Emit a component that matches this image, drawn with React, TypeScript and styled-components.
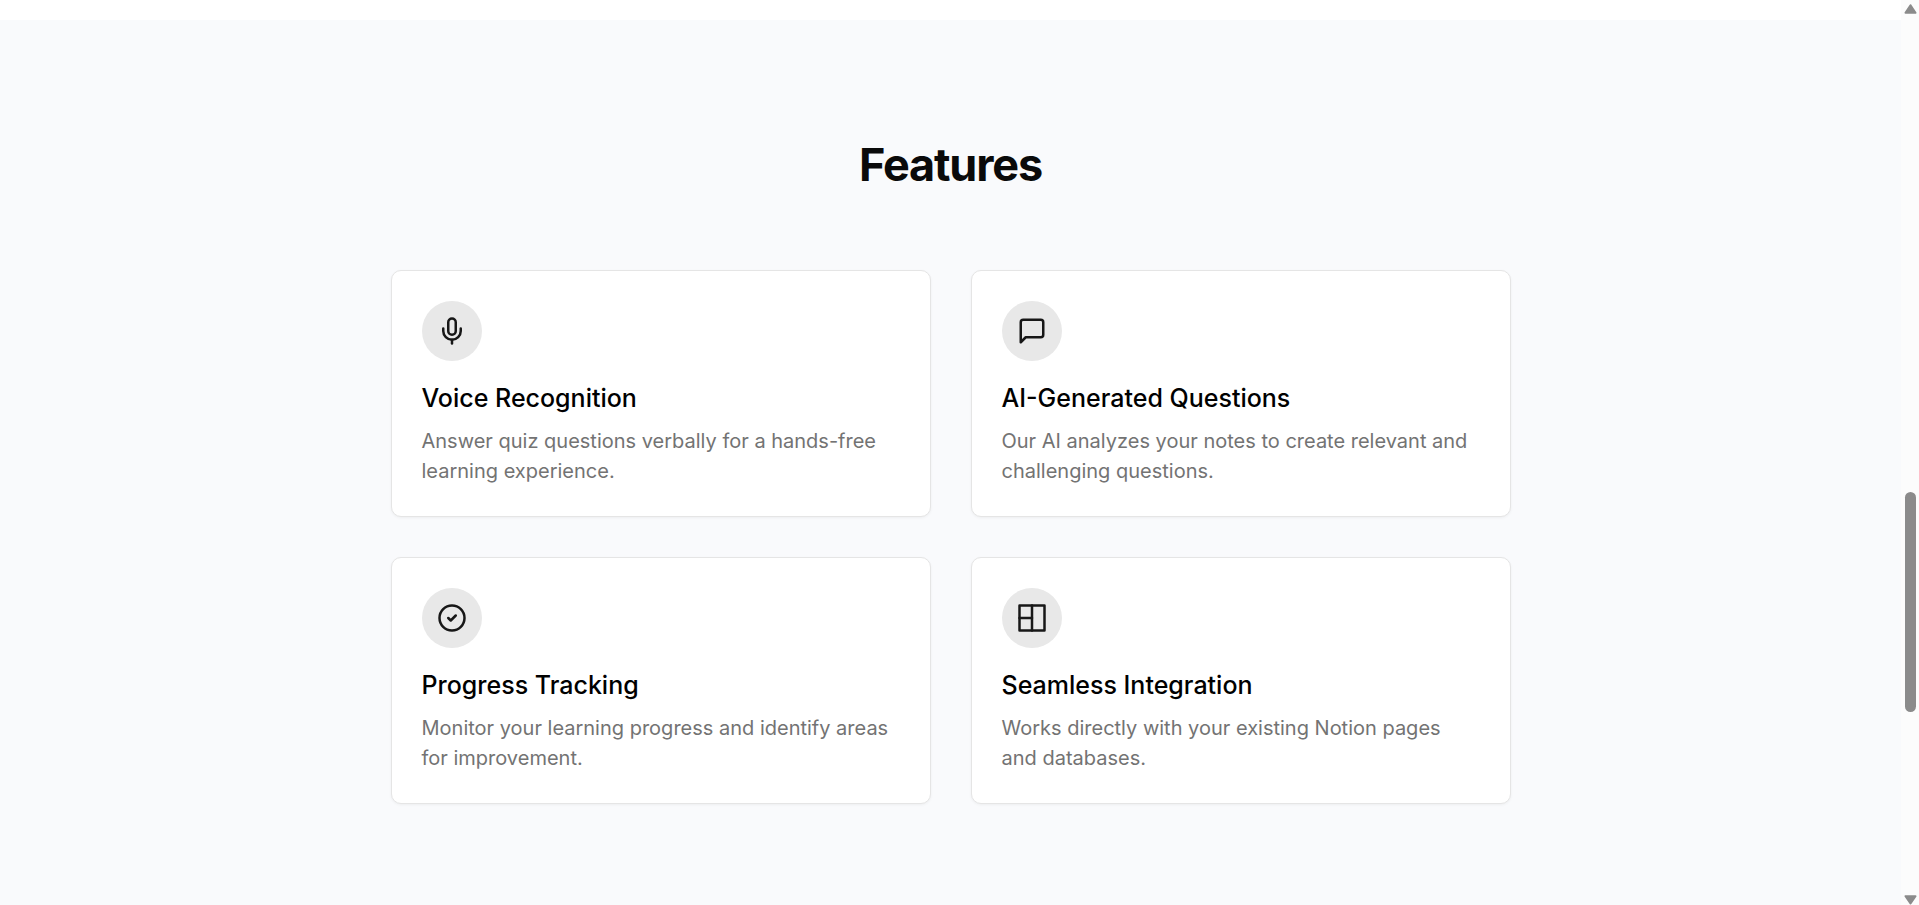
import React from "react";
import styled, { createGlobalStyle } from "styled-components";

const GlobalStyle = createGlobalStyle`
  *, *::before, *::after { box-sizing: border-box; }
  body {
    margin: 0;
    background: #ffffff;
    color: #0a0a0a;
    font-family: Inter, "Liberation Sans", sans-serif;
  }
  h2, h3, p { margin: 0; }
`;

const Viewport = styled.div`
  display: flex;
  height: 100vh;
`;

const Main = styled.main`
  flex: 1;
  min-width: 0;
  padding-top: 20px;
  overflow-y: auto;
  scrollbar-width: none;
`;

const Section = styled.section`
  display: flex;
  flex-direction: column;
  align-items: center;
  gap: 80px;
  padding: 120px 30px;
  background: #f9fafc;
`;

const SectionTitle = styled.h2`
  font-size: 45px;
  line-height: 50px;
  font-weight: 700;
  letter-spacing: -0.025em;
  text-align: center;
`;

const FeatureGrid = styled.div`
  display: grid;
  grid-template-columns: repeat(2, minmax(0, 1fr));
  gap: 40px;
  width: 100%;
  max-width: 1120px;

  @media (max-width: 800px) {
    grid-template-columns: minmax(0, 1fr);
  }
`;

const Card = styled.article`
  padding: 30px;
  background: #ffffff;
  border: 1px solid #e5e5e5;
  border-radius: 10px;
  box-shadow: 0 1px 3px rgba(0, 0, 0, 0.05);
`;

const IconBadge = styled.div`
  display: flex;
  align-items: center;
  justify-content: center;
  width: 60px;
  height: 60px;
  border-radius: 50%;
  background: #e8e8e8;
  color: #171717;
`;

const CardTitle = styled.h3`
  margin: 20px 0 10px;
  font-size: 25px;
  line-height: 35px;
  font-weight: 500;
  color: #000000;
`;

const CardText = styled.p`
  font-size: 20px;
  line-height: 30px;
  color: #737373;
`;

const ScrollBar = styled.div`
  display: flex;
  flex-direction: column;
  align-items: center;
  width: 18px;
  background: #fcfcfc;
  color: #8b8b8b;
`;

const ScrollArrow = styled.svg`
  display: block;
  flex: none;
  width: 18px;
  height: 18px;
  fill: currentColor;
  stroke: currentColor;
  stroke-width: 2;
  stroke-linejoin: round;
`;

const TrackGap = styled.div<{ $share: number }>`
  flex: ${(p) => p.$share} 1 0;
`;

const Thumb = styled.div<{ $share: number }>`
  flex: ${(p) => p.$share} 1 0;
  width: 11px;
  margin-left: 1px;
  border-radius: 6px;
  background: currentColor;
`;

const Glyph = ({ children }: { children: React.ReactNode }) => (
  <svg
    width="30"
    height="30"
    viewBox="0 0 24 24"
    fill="none"
    stroke="currentColor"
    strokeWidth="2"
    strokeLinecap="round"
    strokeLinejoin="round"
    aria-hidden="true"
  >
    {children}
  </svg>
);

const features = [
  {
    title: "Voice Recognition",
    text: "Answer quiz questions verbally for a hands-free learning experience.",
    icon: (
      <>
        <path d="M12 2a3 3 0 0 0-3 3v7a3 3 0 0 0 6 0V5a3 3 0 0 0-3-3Z" />
        <path d="M19 10v2a7 7 0 0 1-14 0v-2" />
        <path d="M12 19v3" />
      </>
    ),
  },
  {
    title: "AI-Generated Questions",
    text: "Our AI analyzes your notes to create relevant and challenging questions.",
    icon: <path d="M21 15a2 2 0 0 1-2 2H7l-4 4V5a2 2 0 0 1 2-2h14a2 2 0 0 1 2 2z" />,
  },
  {
    title: "Progress Tracking",
    text: "Monitor your learning progress and identify areas for improvement.",
    icon: (
      <>
        <circle cx="12" cy="12" r="10" />
        <path d="m9 12 2 2 4-4" />
      </>
    ),
  },
  {
    title: "Seamless Integration",
    text: "Works directly with your existing Notion pages and databases.",
    icon: (
      <>
        <path d="M2 2h20v20H2z" />
        <path d="M12 2v20" />
        <path d="M2 12h10" />
      </>
    ),
  },
];

export default function App() {
  return (
    <>
      <GlobalStyle />
      <Viewport>
        <Main>
          <Section aria-labelledby="features-title">
            <SectionTitle id="features-title">Features</SectionTitle>
            <FeatureGrid>
              {features.map((f) => (
                <Card key={f.title}>
                  <IconBadge>
                    <Glyph>{f.icon}</Glyph>
                  </IconBadge>
                  <CardTitle>{f.title}</CardTitle>
                  <CardText>{f.text}</CardText>
                </Card>
              ))}
            </FeatureGrid>
          </Section>
        </Main>
        <ScrollBar aria-hidden="true">
          <ScrollArrow viewBox="0 0 18 18">
            <path d="M9.5 5.2 14.5 12.8H4.5Z" />
          </ScrollArrow>
          <TrackGap $share={474} />
          <Thumb $share={220} />
          <TrackGap $share={175} />
          <ScrollArrow viewBox="0 0 18 18">
            <path d="M4.5 9.2H14.5L9.5 16.5Z" />
          </ScrollArrow>
        </ScrollBar>
      </Viewport>
    </>
  );
}
